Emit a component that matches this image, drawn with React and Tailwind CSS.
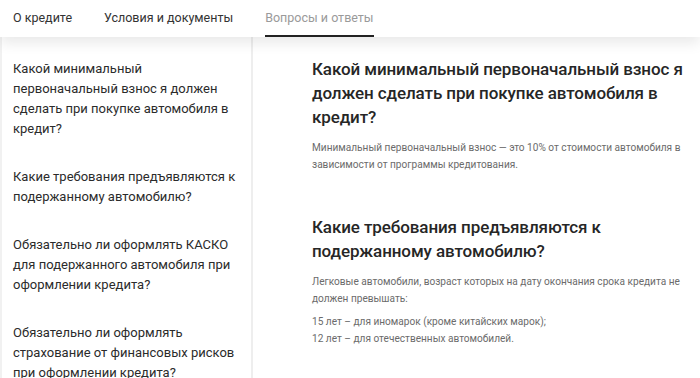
export default function App() {
  const font = { fontFamily: 'Roboto, "Noto Sans", sans-serif' };
  const questions = [
    "Какой минимальный первоначальный взнос я должен сделать при покупке автомобиля в кредит?",
    "Какие требования предъявляются к подержанному автомобилю?",
    "Обязательно ли оформлять КАСКО для подержанного автомобиля при оформлении кредита?",
    "Обязательно ли оформлять страхование от финансовых рисков при оформлении кредита?",
  ];
  return (
    <div className="w-[700px] h-[378px] overflow-hidden bg-white flex flex-col" style={font}>
      <header className="relative z-10 h-[37px] shrink-0 bg-white flex items-stretch pl-[13px] gap-[32px] text-[12.5px] shadow-[0_6px_14px_rgba(0,0,0,0.09)]">
        <div className="flex items-center text-[#333]">О кредите</div>
        <div className="flex items-center text-[#333]">Условия и документы</div>
        <div className="flex items-center text-[#9a9a9a] border-b-2 border-[#222] pt-[2px]">Вопросы и ответы</div>
      </header>
      <div className="flex flex-1 min-h-0">
        <aside className="w-[253px] shrink-0 border-l-2 border-[#f1f1f1] border-r-2 border-r-[#eeeeee] pl-[11px] pr-[13px] pt-[22px] flex flex-col gap-[28px] text-[13px] leading-[20px] text-[#2b2b2b]">
          {questions.map((q) => (
            <p key={q}>{q}</p>
          ))}
        </aside>
        <main className="flex-1 pl-[59px] pr-[8px] pt-[20px] text-[#2b2b2b]">
          <h2 className="text-[17px] leading-[24px] font-medium tracking-[-0.1px] text-[#262626]">
            Какой минимальный первоначальный взнос я должен сделать при покупке автомобиля в кредит?
          </h2>
          <p className="mt-[10px] text-[10.1px] leading-[17px] text-[#6b6b6b]">
            Минимальный первоначальный взнос — это 10% от стоимости автомобиля в зависимости от программы кредитования.
          </p>
          <p className="h-[42px]"></p>
          <h2 className="text-[17px] leading-[24px] font-medium tracking-[-0.1px] text-[#262626]">
            Какие требования предъявляются к подержанному автомобилю?
          </h2>
          <p className="mt-[10px] text-[10.1px] leading-[17px] text-[#6b6b6b]">
            Легковые автомобили, возраст которых на дату окончания срока кредита не должен превышать:
          </p>
          <p className="mt-[6px] text-[10.1px] leading-[17px] text-[#6b6b6b]">
            15 лет – для иномарок (кроме китайских марок);
            <br />
            12 лет – для отечественных автомобилей.
          </p>
        </main>
      </div>
    </div>
  );
}
